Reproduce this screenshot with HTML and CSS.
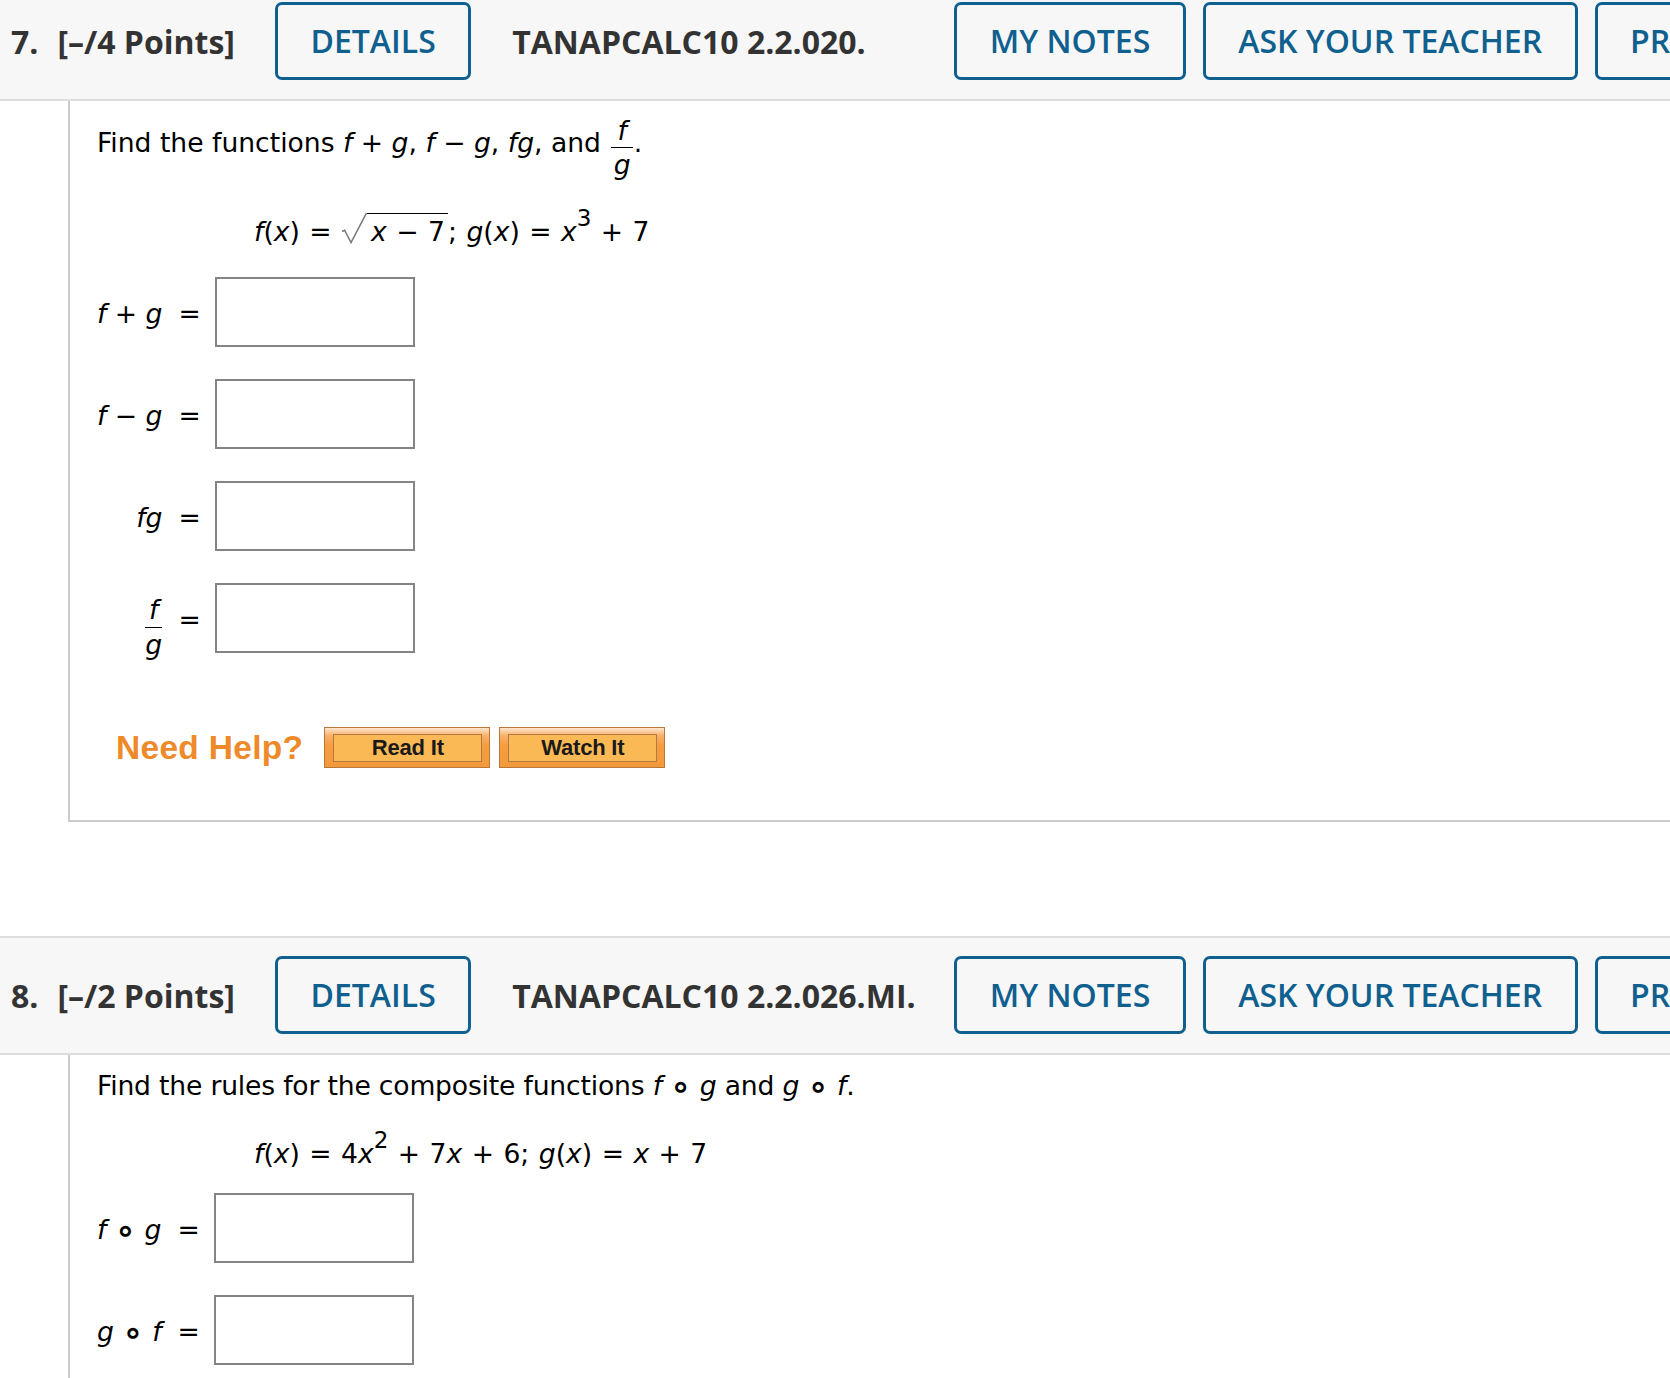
FILE: index.html
```html
<!DOCTYPE html>
<html lang="en">
<head>
<meta charset="utf-8">
<title>WebAssign questions</title>
<link rel="stylesheet" href="styles.css">
</head>
<body>
<div class="page">
  <section class="question">
    <header class="qhead">
      <div class="qnum"><span class="qn">7.</span><span class="pts">[–/4 Points]</span></div>
      <button class="hbtn">DETAILS</button>
      <div class="qid">TANAPCALC10 2.2.020.</div>
      <button class="hbtn">MY NOTES</button>
      <button class="hbtn">ASK YOUR TEACHER</button>
      <button class="hbtn">PRACTICE ANOTHER</button>
    </header>
    <div class="qbody">
      <p class="prompt">Find the functions <i>f</i> + <i>g</i>, <i>f</i> − <i>g</i>, <i>fg</i>, and <span class="frac"><span class="num"><i>f</i></span><span class="den"><i>g</i></span></span>.</p>
      <p class="formula"><i>f</i>(<i>x</i>) = <span class="sqrt"><svg class="rad" width="26" height="32" viewBox="0 0 26 32"><path d="M1 19.5 L3.6 18.2 L10 30.5 L25.5 1" fill="none" stroke="#7a7a7a" stroke-width="1.6" stroke-linejoin="miter"/></svg><span class="radicand"><i>x</i> − 7</span></span>; <i>g</i>(<i>x</i>) = <i>x</i><sup>3</sup> + 7</p>
      <div class="answers answers-wide">
        <div class="alabel"><i>f</i> + <i>g</i></div><div class="eq">=</div><input class="abox" type="text">
        <div class="alabel"><i>f</i> − <i>g</i></div><div class="eq">=</div><input class="abox" type="text">
        <div class="alabel"><i>fg</i></div><div class="eq">=</div><input class="abox" type="text">
        <div class="alabel alabel-frac"><span class="frac frac-block"><span class="num"><i>f</i></span><span class="den"><i>g</i></span></span></div><div class="eq">=</div><input class="abox" type="text">
      </div>
      <div class="help">
        <span class="help-title">Need Help?</span>
        <button class="hbutton"><span class="hbutton-in">Read It</span></button>
        <button class="hbutton"><span class="hbutton-in">Watch It</span></button>
      </div>
    </div>
  </section>

  <section class="question question-next">
    <header class="qhead">
      <div class="qnum"><span class="qn">8.</span><span class="pts">[–/2 Points]</span></div>
      <button class="hbtn">DETAILS</button>
      <div class="qid">TANAPCALC10 2.2.026.MI.</div>
      <button class="hbtn">MY NOTES</button>
      <button class="hbtn">ASK YOUR TEACHER</button>
      <button class="hbtn">PRACTICE ANOTHER</button>
    </header>
    <div class="qbody">
      <p class="prompt prompt-tight">Find the rules for the composite functions <i>f</i> <span class="ring">∘</span> <i>g</i> and <i>g</i> <span class="ring">∘</span> <i>f</i>.</p>
      <p class="formula"><i>f</i>(<i>x</i>) = 4<i>x</i><sup>2</sup> + 7<i>x</i> + 6; <i>g</i>(<i>x</i>) = <i>x</i> + 7</p>
      <div class="answers answers-narrow">
        <div class="alabel"><i>f</i> <span class="ring">∘</span> <i>g</i></div><div class="eq">=</div><input class="abox" type="text">
        <div class="alabel"><i>g</i> <span class="ring">∘</span> <i>f</i></div><div class="eq">=</div><input class="abox" type="text">
      </div>
    </div>
  </section>
</div>
</body>
</html>
```

FILE: styles.css
```css
* { box-sizing: border-box; }

html, body {
  margin: 0;
  padding: 0;
  background: #ffffff;
}

body {
  width: 1670px;
  height: 1378px;
  overflow: hidden;
}

.page {
  margin-top: -18px;
}

/* ---------- question header ---------- */
.qhead {
  display: flex;
  align-items: center;
  white-space: nowrap;
  overflow: hidden;
  background: #f7f7f7;
  border-top: 2px solid #dddddd;
  border-bottom: 2px solid #dddddd;
  padding: 18px 0 19px 11px;
  font-family: "Open Sans", "Liberation Sans", sans-serif;
  font-size: 32px;
  color: #333333;
}

.qnum {
  flex: none;
  font-weight: 700;
  margin-right: 40px;
}

.qnum .pts {
  margin-left: 19px;
}

.qid {
  flex: 0 0 466px;
  width: 466px;
  font-weight: 700;
  padding-left: 24px;
}

.hbtn {
  flex: none;
  height: 78px;
  padding: 0 32.5px;
  border: 3px solid #0f5f8f;
  border-radius: 7px;
  background: transparent;
  color: #0f5f8f;
  font-family: "Open Sans", "Liberation Sans", sans-serif;
  font-size: 32px;
  font-weight: 600;
  line-height: 1;
  margin-right: 17px;
}

/* ---------- question body ---------- */
.qbody {
  margin-left: 68px;
  border-left: 2px solid #cccccc;
  border-bottom: 2px solid #cccccc;
  padding: 14.7px 0 52px 27px;
  font-family: "DejaVu Sans", Verdana, sans-serif;
  font-size: 26.6px;
  color: #000000;
}

.question-next {
  margin-top: 114px;
}

.question-next .qbody {
  border-bottom: none;
  height: 400px;
}

.prompt {
  margin: 0;
  line-height: 32px;
}

.prompt-tight {
  letter-spacing: -0.18px;
}

.formula {
  margin: 32px 0 0 0;
  padding-left: 157px;
  line-height: 40px;
  word-spacing: 1px;
}

.formula sup {
  font-size: 23px;
  line-height: 0;
  vertical-align: 15px;
}

.frac {
  display: inline-block;
  vertical-align: -22.4px;
  text-align: center;
  margin: 0 1px 0 2px;
}

.frac .num {
  display: block;
  line-height: 30px;
  padding: 0 6px 1.5px;
  border-bottom: 1.5px solid #000000;
}

.frac .den {
  display: block;
  line-height: 30px;
  padding-top: 2px;
}

.sqrt {
  white-space: nowrap;
}

.rad {
  vertical-align: -3px;
}

.radicand {
  border-top: 1.5px solid #000000;
  padding: 2px 3px 0 4px;
}

.ring {
  font-style: normal;
  font-weight: bold;
  font-size: 34px;
  line-height: 0;
  vertical-align: -3px;
  letter-spacing: 0;
}

/* ---------- answer rows ---------- */
.answers {
  display: grid;
  grid-template-columns: max-content max-content max-content;
  align-items: center;
  row-gap: 32px;
}

.answers-wide {
  margin-top: 25px;
}

.answers-narrow {
  margin-top: 19px;
}

.alabel {
  text-align: right;
  line-height: 32px;
  padding-top: 4px;
}

.alabel-frac {
  justify-self: end;
  height: 70px;
  padding-top: 0;
  display: flex;
  align-items: flex-end;
}

.frac-block {
  margin: 0 0 -6.75px 0;
}

.frac-block .num {
  padding: 0 4px 1.5px;
}

.eq {
  line-height: 32px;
  padding: 4px 14px 0 16px;
}

.abox {
  display: block;
  width: 200px;
  height: 70px;
  margin: 0;
  border: 2px solid #858585;
  background: #ffffff;
  border-radius: 0;
  padding: 0;
}

/* ---------- help row ---------- */
.help {
  display: flex;
  align-items: center;
  margin-top: 74px;
  padding-left: 19px;
  height: 41px;
}

.help-title {
  font-family: "Liberation Sans", Arial, sans-serif;
  font-weight: bold;
  font-size: 33.5px;
  line-height: 41px;
  color: #ef8a2a;
  margin-right: 21px;
  letter-spacing: 0.3px;
}

.hbutton {
  width: 166px;
  height: 41px;
  margin: 0 9px 0 0;
  padding: 6px 7px 5px 8px;
  border: 1px solid #b9773a;
  background: linear-gradient(#fde6cf 0%, #f8b068 20%, #f59d3f 45%, #f29a3b 100%);
  cursor: pointer;
  display: flex;
}

.hbutton-in {
  flex: 1;
  display: flex;
  align-items: center;
  justify-content: center;
  border: 1px solid #b57a42;
  background: #fab954;
  font-family: "Liberation Sans", Arial, sans-serif;
  font-weight: bold;
  font-size: 22px;
  color: #1a1a1a;
  letter-spacing: -0.2px;
}
```
